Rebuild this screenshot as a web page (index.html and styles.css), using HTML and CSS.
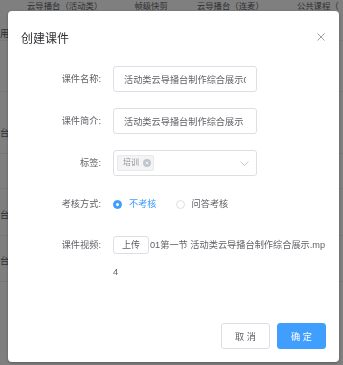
FILE: index.html
```html
<!DOCTYPE html>
<html lang="zh-CN">
<head>
    <meta charset="UTF-8">
    <meta name="viewport" content="width=device-width, initial-scale=1.0">
    <title>创建课件</title>
    <link rel="stylesheet" href="styles.css">
</head>
<body>
    <div class="page">
        <div class="tabs">
            <span class="tab tab-1">云导播台（活动类）</span>
            <span class="tab tab-2">帧级快剪</span>
            <span class="tab tab-3">云导播台（连麦）</span>
            <span class="tab tab-4">公共课程（</span>
        </div>
        <div class="table">
            <div class="table-row row-a">用户</div>
            <div class="table-row row-b"></div>
            <div class="table-row row-c">台名</div>
            <div class="table-row row-d"></div>
            <div class="table-row row-e">台名</div>
            <div class="table-row row-f">台名</div>
        </div>
    </div>

    <div class="mask"></div>

    <div class="dialog">
        <div class="dialog-header">
            <span class="dialog-title">创建课件</span>
            <button class="dialog-close" aria-label="关闭">
                <svg width="8" height="8" viewBox="0 0 8 8"><path d="M0.5 0.5L7.5 7.5M7.5 0.5L0.5 7.5" stroke="#909399" stroke-width="0.9" fill="none"/></svg>
            </button>
        </div>

        <div class="dialog-body">
            <div class="form-item">
                <label class="form-label">课件名称:</label>
                <div class="form-content">
                    <input class="input" type="text" value="活动类云导播台制作综合展示01">
                </div>
            </div>

            <div class="form-item">
                <label class="form-label">课件简介:</label>
                <div class="form-content">
                    <input class="input" type="text" value="活动类云导播台制作综合展示">
                </div>
            </div>

            <div class="form-item">
                <label class="form-label">标签:</label>
                <div class="form-content">
                    <div class="select">
                        <span class="tag">培训
                            <span class="tag-close">
                                <svg width="8" height="8" viewBox="0 0 8 8"><circle cx="4" cy="4" r="4" fill="#c0c4cc"/><path d="M2.6 2.6L5.4 5.4M5.4 2.6L2.6 5.4" stroke="#fff" stroke-width="0.8"/></svg>
                            </span>
                        </span>
                        <svg class="select-arrow" width="9" height="5" viewBox="0 0 9 5"><path d="M0.5 0.5L4.5 4.5L8.5 0.5" stroke="#c0c4cc" stroke-width="0.9" fill="none"/></svg>
                    </div>
                </div>
            </div>

            <div class="form-item">
                <label class="form-label">考核方式:</label>
                <div class="form-content radios">
                    <label class="radio radio-checked"><span class="radio-dot"></span>不考核</label>
                    <label class="radio"><span class="radio-dot"></span>问答考核</label>
                </div>
            </div>

            <div class="form-item form-item-video">
                <label class="form-label">课件视频:</label>
                <div class="form-content video">
                    <button class="upload-button">上传</button><span class="file-name">01第一节 活动类云导播台制作综合展示.mp4</span>
                </div>
            </div>
        </div>

        <div class="dialog-footer">
            <button class="button">取 消</button>
            <button class="button button-primary">确 定</button>
        </div>
    </div>
</body>
</html>
```

FILE: styles.css
```css
* {
    margin: 0;
    padding: 0;
    box-sizing: border-box;
}

body {
    font-family: 'Liberation Sans', 'Noto Sans CJK SC', sans-serif;
    background: #fff;
    color: #606266;
    width: 343px;
    height: 365px;
    overflow: hidden;
}

/* page under the mask */
.page {
    width: 343px;
    height: 365px;
}

.tabs {
    display: flex;
    height: 14px;
    font-size: 8.4px;
    line-height: 13px;
    color: #606266;
    white-space: nowrap;
}

.tab-1 { margin-left: 27px; }
.tab-2 { margin-left: 32px; }
.tab-3 { margin-left: 29px; }
.tab-4 { margin-left: 33px; }

.table-row {
    border-bottom: 1px solid #ebeef5;
    font-size: 9.2px;
    color: #606266;
    overflow: hidden;
    white-space: nowrap;
}

.row-a { height: 27px; padding-top: 12px; }
.row-b { height: 51px; }
.row-c { height: 62px; padding-top: 33px; }
.row-d { height: 35px; }
.row-e { height: 47px; padding-top: 18px; }
.row-f { height: 46px; padding-top: 17px; }

.mask {
    position: fixed;
    inset: 0;
    background: rgba(0, 0, 0, 0.5);
}

/* dialog */
.dialog {
    position: fixed;
    left: 8px;
    top: 11px;
    width: 331px;
    height: 351px;
    background: #fff;
    border-radius: 4px;
    box-shadow: 0 1px 3px rgba(0, 0, 0, 0.3);
    display: flex;
    flex-direction: column;
}

.dialog-header {
    display: flex;
    justify-content: space-between;
    align-items: center;
    padding: 13px 13px 0 13px;
    height: 43px;
}

.dialog-title {
    font-size: 12px;
    line-height: 16px;
    color: #303133;
}

.dialog-close {
    border: none;
    background: none;
    display: flex;
    margin-top: -4px;
    margin-right: 1px;
}

.dialog-body {
    padding: 12px 13px 0 13px;
    display: flex;
    flex-direction: column;
    gap: 15px;
}

.form-item {
    display: flex;
    min-height: 26px;
}

.form-label {
    width: 92px;
    flex-shrink: 0;
    text-align: right;
    padding-right: 12px;
    font-size: 9.2px;
    line-height: 26px;
    color: #606266;
}

.form-content {
    flex: 1;
    font-size: 9.2px;
    line-height: 26px;
}

.input {
    width: 144px;
    height: 26px;
    border: 1px solid #dcdfe6;
    border-radius: 3px;
    padding: 0 10px;
    font-family: 'Liberation Sans', 'Noto Sans CJK SC', sans-serif;
    font-size: 9.2px;
    color: #606266;
    outline: none;
}

.select {
    width: 144px;
    height: 26px;
    border: 1px solid #dcdfe6;
    border-radius: 3px;
    display: flex;
    align-items: center;
    justify-content: space-between;
    padding: 0 7px 0 3px;
}

.tag {
    display: flex;
    align-items: center;
    gap: 4px;
    height: 16px;
    padding: 0 2px 0 5px;
    background: #f4f4f5;
    border: 1px solid #e9e9eb;
    border-radius: 2px;
    font-size: 8px;
    color: #909399;
}

.tag-close {
    display: flex;
}

.radios {
    display: flex;
    align-items: center;
    gap: 19px;
}

.radio {
    display: flex;
    align-items: center;
    gap: 7px;
    color: #606266;
}

.radio-dot {
    width: 9px;
    height: 9px;
    border: 1px solid #dcdfe6;
    border-radius: 50%;
    background: #fff;
}

.radio-checked {
    color: #409eff;
}

.radio-checked .radio-dot {
    border-color: #409eff;
    background: #409eff;
    display: flex;
    align-items: center;
    justify-content: center;
}

.radio-checked .radio-dot::after {
    content: '';
    width: 3px;
    height: 3px;
    border-radius: 50%;
    background: #fff;
}

.form-item-video .form-label,
.video {
    line-height: 27px;
}

.video {
    color: #606266;
    word-break: break-all;
}

.upload-button {
    display: inline-block;
    vertical-align: middle;
    width: 36px;
    height: 18px;
    margin-top: -2px;
    margin-right: 1px;
    border: 1px solid #dcdfe6;
    border-radius: 3px;
    background: #fff;
    font-family: 'Liberation Sans', 'Noto Sans CJK SC', sans-serif;
    font-size: 9px;
    line-height: 16px;
    color: #606266;
}

.dialog-footer {
    margin-top: auto;
    display: flex;
    justify-content: flex-end;
    gap: 7px;
    padding: 0 13px 13px 13px;
}

.button {
    width: 49px;
    height: 26px;
    border: 1px solid #dcdfe6;
    border-radius: 3px;
    background: #fff;
    font-family: 'Liberation Sans', 'Noto Sans CJK SC', sans-serif;
    font-size: 9.2px;
    color: #606266;
}

.button-primary {
    background: #409eff;
    border-color: #409eff;
    color: #fff;
}
```
